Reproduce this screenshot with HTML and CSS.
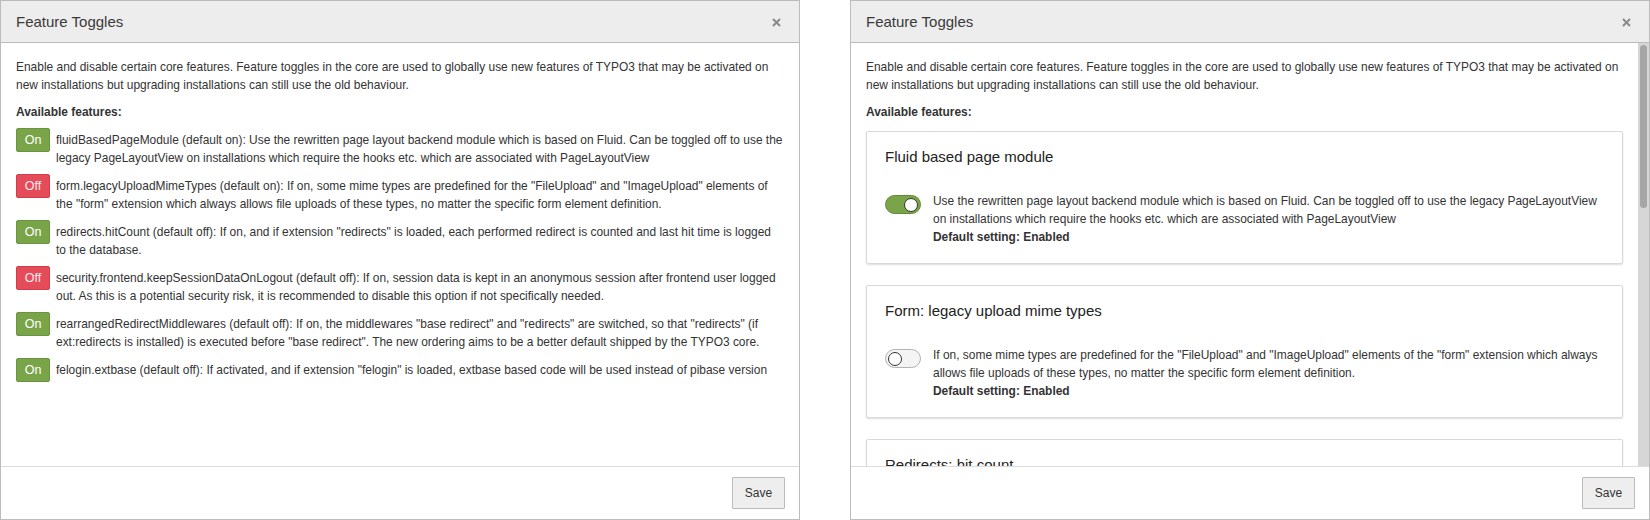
FILE: index.html
```html
<!DOCTYPE html>
<html>
<head>
<meta charset="utf-8">
<link rel="stylesheet" href="styles.css">
</head>
<body>
<div class="stage">
  <div class="modal">
    <div class="modal-header">
      <span class="modal-title">Feature Toggles</span>
      <svg class="close" width="9" height="9" viewBox="0 0 9 9"><path d="M1 1L8 8M8 1L1 8" stroke="#8a8a8a" stroke-width="2" fill="none"/></svg>
    </div>
    <div class="body-wrap">
      <div class="modal-body">
        <p class="intro">Enable and disable certain core features. Feature toggles in the core are used to globally use new features of TYPO3 that may be activated on new installations but upgrading installations can still use the old behaviour.</p>
        <p class="avail">Available features:</p>
        <div class="row"><span class="btn on">On</span><span class="desc">fluidBasedPageModule (default on): Use the rewritten page layout backend module which is based on Fluid. Can be toggled off to use the legacy PageLayoutView on installations which require the hooks etc. which are associated with PageLayoutView</span></div>
        <div class="row"><span class="btn off">Off</span><span class="desc">form.legacyUploadMimeTypes (default on): If on, some mime types are predefined for the "FileUpload" and "ImageUpload" elements of the "form" extension which always allows file uploads of these types, no matter the specific form element definition.</span></div>
        <div class="row"><span class="btn on">On</span><span class="desc">redirects.hitCount (default off): If on, and if extension "redirects" is loaded, each performed redirect is counted and last hit time is logged to the database.</span></div>
        <div class="row"><span class="btn off">Off</span><span class="desc">security.frontend.keepSessionDataOnLogout (default off): If on, session data is kept in an anonymous session after frontend user logged out. As this is a potential security risk, it is recommended to disable this option if not specifically needed.</span></div>
        <div class="row"><span class="btn on">On</span><span class="desc">rearrangedRedirectMiddlewares (default off): If on, the middlewares "base redirect" and "redirects" are switched, so that "redirects" (if ext:redirects is installed) is executed before "base redirect". The new ordering aims to be a better default shipped by the TYPO3 core.</span></div>
        <div class="row"><span class="btn on">On</span><span class="desc">felogin.extbase (default off): If activated, and if extension "felogin" is loaded, extbase based code will be used instead of pibase version</span></div>
      </div>
    </div>
    <div class="modal-footer"><span class="save">Save</span></div>
  </div>

  <div class="modal">
    <div class="modal-header">
      <span class="modal-title">Feature Toggles</span>
      <svg class="close" width="9" height="9" viewBox="0 0 9 9"><path d="M1 1L8 8M8 1L1 8" stroke="#8a8a8a" stroke-width="2" fill="none"/></svg>
    </div>
    <div class="body-wrap">
      <div class="modal-body">
        <p class="intro">Enable and disable certain core features. Feature toggles in the core are used to globally use new features of TYPO3 that may be activated on new installations but upgrading installations can still use the old behaviour.</p>
        <p class="avail avail-cards">Available features:</p>
        <div class="card">
          <div class="card-title">Fluid based page module</div>
          <div class="card-row">
            <span class="switch is-on"><span class="knob"></span></span>
            <div class="card-text">Use the rewritten page layout backend module which is based on Fluid. Can be toggled off to use the legacy PageLayoutView on installations which require the hooks etc. which are associated with PageLayoutView<br><b>Default setting: Enabled</b></div>
          </div>
        </div>
        <div class="card">
          <div class="card-title">Form: legacy upload mime types</div>
          <div class="card-row">
            <span class="switch"><span class="knob"></span></span>
            <div class="card-text">If on, some mime types are predefined for the "FileUpload" and "ImageUpload" elements of the "form" extension which always allows file uploads of these types, no matter the specific form element definition.<br><b>Default setting: Enabled</b></div>
          </div>
        </div>
        <div class="card">
          <div class="card-title">Redirects: hit count</div>
          <div class="card-row">
            <span class="switch is-on"><span class="knob"></span></span>
            <div class="card-text">If on, and if extension "redirects" is loaded, each performed redirect is counted and last hit time is logged to the database.<br><b>Default setting: Disabled</b></div>
          </div>
        </div>
      </div>
      <div class="scrollbar"><div class="thumb"></div></div>
    </div>
    <div class="modal-footer"><span class="save">Save</span></div>
  </div>
</div>
</body>
</html>
```
FILE: styles.css
```css
* { box-sizing: border-box; }
html, body { margin: 0; padding: 0; background: #fff; }
body {
  font-family: "Liberation Sans", Arial, sans-serif;
  font-size: 11.95px;
  color: #333;
  width: 1650px;
  height: 520px;
  overflow: hidden;
}
.stage {
  display: flex;
  gap: 50px;
}
.modal {
  width: 800px;
  height: 520px;
  border: 1px solid #bcbcbc;
  display: flex;
  flex-direction: column;
  background: #fff;
}
.modal-header {
  height: 42px;
  flex: 0 0 42px;
  background: #ededed;
  border-bottom: 1px solid #bcbcbc;
  display: flex;
  align-items: center;
  justify-content: space-between;
  padding: 0 18px 0 15px;
}
.modal-title {
  font-size: 15px;
  color: #3a3a3a;
  line-height: 20px;
}
.close { display: block; margin-top: 1px; }
.body-wrap {
  flex: 1 1 auto;
  min-height: 0;
  display: flex;
}
.modal-body {
  flex: 1 1 auto;
  min-width: 0;
  padding: 15px 15px 0 15px;
  overflow: hidden;
}
.scrollbar {
  flex: 0 0 11px;
  width: 11px;
  background: #d6d6d6;
  padding: 2px 2px;
}
.thumb {
  height: 163px;
  background: #a6a6a6;
  border-radius: 4px;
}
p { margin: 0; line-height: 18px; }
.intro { margin-bottom: 9px; }
.avail { font-weight: bold; margin-bottom: 7px; }
.avail-cards { margin-bottom: 10px; }
.row {
  display: flex;
  align-items: flex-start;
  margin-bottom: 7px;
}
.btn {
  flex: 0 0 34px;
  height: 24px;
  line-height: 22px;
  text-align: center;
  font-size: 12.5px;
  border-radius: 2px;
  border: 1px solid;
  margin-right: 6px;
}
.btn.on { background: #79a548; border-color: #6a9440; color: #fff; }
.btn.off { background: #e54c5a; border-color: #d73a4a; color: #ffe9ec; }
.desc { line-height: 18px; margin-top: 3px; }
.card {
  border: 1px solid #d9d9d9;
  border-radius: 2px;
  box-shadow: 0 1px 2px rgba(0,0,0,0.14);
  padding: 15px 18px 17px 18px;
  margin-bottom: 21px;
}
.card-title {
  font-size: 15px;
  line-height: 20px;
  color: #222;
  margin-bottom: 25px;
}
.card-row { display: flex; align-items: flex-start; }
.card-text { line-height: 18px; }
.switch {
  flex: 0 0 36px;
  width: 36px;
  height: 19px;
  border-radius: 10px;
  border: 1px solid #b3b3b3;
  background: #f4f4f4;
  margin: 3px 12px 0 0;
  display: flex;
  align-items: center;
  padding: 0 2px;
}
.switch .knob {
  width: 14px;
  height: 14px;
  border-radius: 50%;
  background: #fff;
  border: 1px solid #333;
}
.switch.is-on {
  background: #79a548;
  border-color: #628a37;
  justify-content: flex-end;
}
.modal-footer {
  flex: 0 0 53px;
  height: 53px;
  border-top: 1px solid #dcdcdc;
  display: flex;
  justify-content: flex-end;
  align-items: flex-start;
  padding: 10px 14px 0 0;
}
.save {
  display: inline-block;
  width: 53px;
  height: 32px;
  line-height: 30px;
  text-align: center;
  background: #eeeeee;
  border: 1px solid #bbbbbb;
  border-radius: 1px;
  color: #333;
  font-size: 12px;
}
```
